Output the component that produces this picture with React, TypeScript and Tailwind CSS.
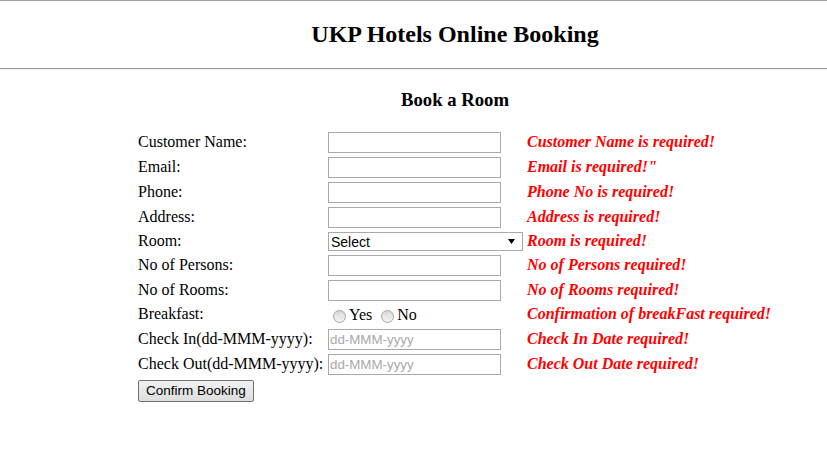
import React from "react";

const serif = "font-['Liberation_Serif','Times_New_Roman',serif]";
const sans = "font-['Liberation_Sans',Arial,sans-serif]";

type Row = {
  label: string;
  kind: "text" | "select" | "radio" | "date";
  error: string;
};

const rows: Row[] = [
  { label: "Customer Name:", kind: "text", error: "Customer Name is required!" },
  { label: "Email:", kind: "text", error: 'Email is required!"' },
  { label: "Phone:", kind: "text", error: "Phone No is required!" },
  { label: "Address:", kind: "text", error: "Address is required!" },
  { label: "Room:", kind: "select", error: "Room is required!" },
  { label: "No of Persons:", kind: "text", error: "No of Persons required!" },
  { label: "No of Rooms:", kind: "text", error: "No of Rooms required!" },
  { label: "Breakfast:", kind: "radio", error: "Confirmation of breakFast required!" },
  { label: "Check In(dd-MMM-yyyy):", kind: "date", error: "Check In Date required!" },
  { label: "Check Out(dd-MMM-yyyy):", kind: "date", error: "Check Out Date required!" },
];

function Radio({ label }: { label: string }) {
  return (
    <span className="flex items-center">
      <span className="ml-[5px] mr-[3px] mt-[3px] h-[13px] w-[13px] rounded-full border border-[#a6a6a6] bg-linear-to-b from-[#d6d6d6] to-[#f6f6f6]" />
      <span>{label}</span>
    </span>
  );
}

function Field({ kind }: { kind: Row["kind"] }) {
  if (kind === "select") {
    return (
      <div className={`flex h-[19px] w-[195px] items-center justify-between border border-[#a9a9a9] bg-white pl-[2px] pr-[7px] text-[14px] text-black ${sans}`}>
        <span>Select</span>
        <svg width="7" height="5" viewBox="0 0 7 5">
          <path d="M0 0 H7 L3.5 5 Z" fill="#000" />
        </svg>
      </div>
    );
  }
  if (kind === "radio") {
    return (
      <div className="flex items-center gap-[4px]">
        <Radio label="Yes" />
        <Radio label="No" />
      </div>
    );
  }
  return (
    <input
      type="text"
      placeholder={kind === "date" ? "dd-MMM-yyyy" : undefined}
      className={`h-[21px] w-[173px] border border-[#a9a9a9] bg-white px-[1px] text-[13.33px] outline-none placeholder:text-[#a9a9a9] ${sans}`}
    />
  );
}

export default function App() {
  return (
    <div className={`min-h-[450px] w-full bg-white text-black ${serif}`}>
      <div className="border-t border-[#a0a0a0]">
        <div className="ml-[138px] w-[634px] pt-[19px]">
          <h1 className="text-center text-[24px] font-bold leading-[28px]">UKP Hotels Online Booking</h1>
        </div>
        <div className="mt-[20px] h-[2px] border-t border-b border-t-[#9a9a9a] border-b-[#eeeeee]" />
      </div>

      <div className="ml-[138px] w-[634px]">
        <h2 className="mt-[19px] text-center text-[18.72px] font-bold leading-[22px]">Book a Room</h2>

        <div className="mt-[20px] flex flex-col gap-[2px]">
          {rows.map((r) => (
            <div
              key={r.label}
              className={`flex items-center text-[16px] leading-[18px] ${
                r.kind === "select" ? "h-[21px]" : r.kind === "radio" ? "h-[22px]" : "h-[23px]"
              }`}
            >
              <div className="w-[190px] -translate-y-[1px] whitespace-nowrap">{r.label}</div>
              <div className="w-[199px]">
                <Field kind={r.kind} />
              </div>
              <div className="-translate-y-[1px] whitespace-nowrap font-bold italic text-[#ff0000]">{r.error}</div>
            </div>
          ))}
          <div className="h-[23px]">
            <button
              type="button"
              className={`h-[22px] rounded-[2px] border border-[#707070] bg-linear-to-b from-[#f2f2f2] to-[#dddddd] px-[7px] text-[13.5px] text-black ${sans}`}
            >
              Confirm Booking
            </button>
          </div>
        </div>
      </div>
    </div>
  );
}
